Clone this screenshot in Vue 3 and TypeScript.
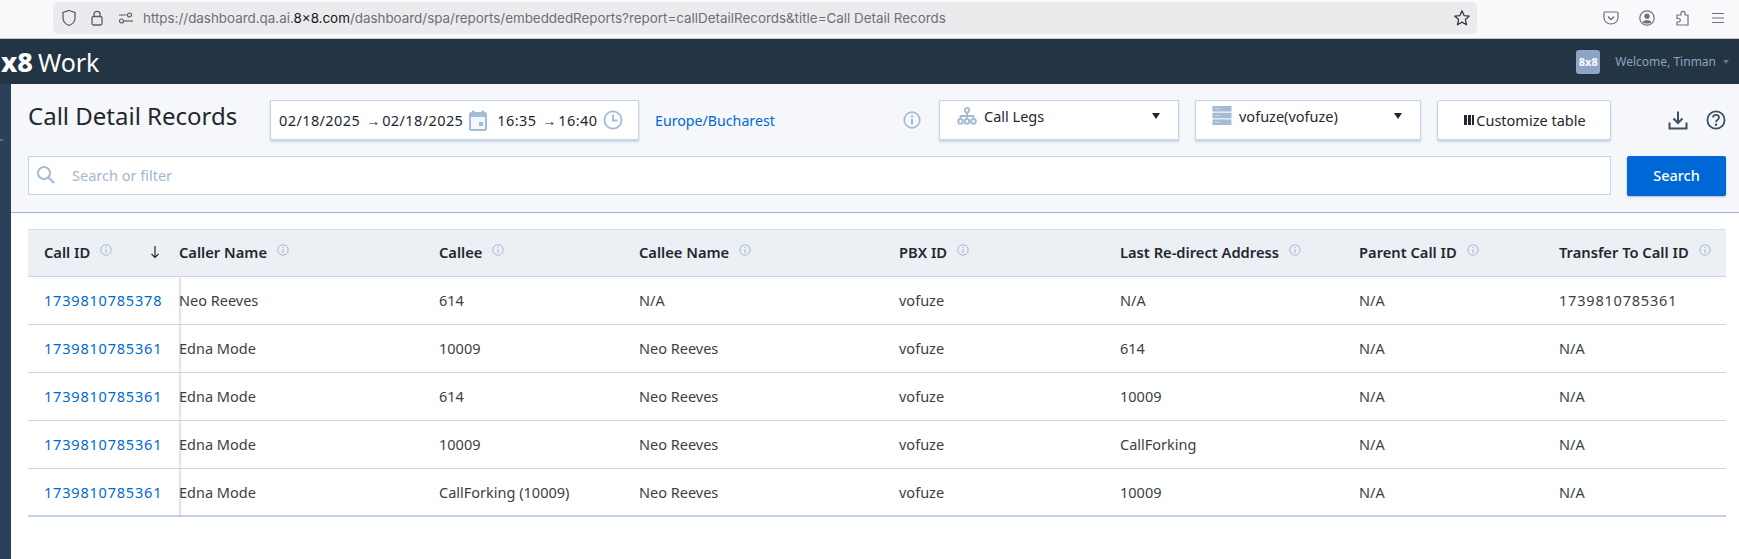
<template>
  <div class="page">
    <!-- Browser chrome -->
    <div class="browser-bar">
      <div class="url-bar">
        <svg class="url-icon shield" viewBox="0 0 16 18" width="16" height="18">
          <path d="M8 1.5 L14 3.5 V9 C14 12.5 11 15.5 8 16.5 C5 15.5 2 12.5 2 9 V3.5 Z" fill="none" stroke="#5b5b66" stroke-width="1.3" />
        </svg>
        <svg class="url-icon lock" viewBox="0 0 14 18" width="14" height="18">
          <rect x="2" y="7.5" width="10" height="8.5" rx="1.5" fill="none" stroke="#5b5b66" stroke-width="1.3" />
          <path d="M4 7.5 V5 C4 1.5 10 1.5 10 5 V7.5" fill="none" stroke="#5b5b66" stroke-width="1.3" />
        </svg>
        <svg class="url-icon perms" viewBox="0 0 16 14" width="16" height="14">
          <circle cx="11.5" cy="4" r="2" fill="none" stroke="#5b5b66" stroke-width="1.2" />
          <path d="M1 4 H8.5 M1 10 H7" stroke="#5b5b66" stroke-width="1.2" />
          <circle cx="3.5" cy="10" r="2" fill="#ebebee" stroke="#5b5b66" stroke-width="1.2" />
          <path d="M7 10 H15" stroke="#5b5b66" stroke-width="1.2" />
        </svg>
        <div class="url-text">https://dashboard.qa.ai.<span class="url-host">8x8.com</span>/dashboard/spa/reports/embeddedReports?report=callDetailRecords&amp;title=Call Detail Records</div>
        <svg class="star" viewBox="0 0 18 18" width="18" height="18">
          <path d="M9 1.8 L11.1 6.6 L16.3 7.1 L12.4 10.6 L13.5 15.8 L9 13.1 L4.5 15.8 L5.6 10.6 L1.7 7.1 L6.9 6.6 Z" fill="none" stroke="#3a3a44" stroke-width="1.3" stroke-linejoin="round" />
        </svg>
      </div>
      <div class="browser-tools">
        <svg viewBox="0 0 16 16" width="16" height="16">
          <path d="M2 2 H14 C14.6 2 15 2.4 15 3 V7.5 C15 11 12 14 8 14 C4 14 1 11 1 7.5 V3 C1 2.4 1.4 2 2 2 Z" fill="none" stroke="#70707c" stroke-width="1.2" />
          <path d="M5 6.5 L8 9.5 L11 6.5" fill="none" stroke="#70707c" stroke-width="1.4" />
        </svg>
        <svg viewBox="0 0 16 16" width="16" height="16">
          <circle cx="8" cy="8" r="7.2" fill="none" stroke="#70707c" stroke-width="1.2" />
          <circle cx="8" cy="6.2" r="2.6" fill="#70707c" />
          <path d="M3.4 12 C5 9.6 11 9.6 12.6 12 C11 14 5 14 3.4 12 Z" fill="#70707c" />
        </svg>
        <svg viewBox="0 0 16 16" width="16" height="16">
          <path d="M3 5 H7 V3 C7 0.8 11 0.8 11 3 V5 H14 V15 H3 V12 H4.5 C7 12 7 8.5 4.5 8.5 H3 Z" fill="none" stroke="#70707c" stroke-width="1.2" stroke-linejoin="round" />
        </svg>
        <svg viewBox="0 0 16 16" width="16" height="16">
          <path d="M2 3.5 H14 M2 8 H14 M2 12.5 H14" stroke="#70707c" stroke-width="1.2" />
        </svg>
      </div>
    </div>

    <!-- App nav -->
    <header class="nav">
      <div class="logo"><span class="logo-mark">x8</span><span class="logo-name">Work</span></div>
      <div class="nav-user">
        <div class="avatar">8x8</div>
        <span class="welcome">Welcome, Tinman</span>
        <span class="caret-small"></span>
      </div>
    </header>

    <div class="body">
      <aside class="sidebar">
        <svg viewBox="0 0 4 4" width="4" height="4">
          <path d="M0 1 L1.5 3 L3 1" fill="none" stroke="#8da5c4" stroke-width="0.8" />
        </svg>
      </aside>
      <main class="main">
        <section class="toolbar">
          <div class="toolbar-top">
            <h1 class="title">Call Detail Records</h1>
            <div class="date-box">
              <span>02/18/2025</span><span class="arrow">→</span><span>02/18/2025</span>
              <svg class="cal" viewBox="0 0 20 21" width="20" height="21">
                <path d="M1 4 C1 3 2 2 3 2 H4 V0.5 H6.5 V2 H13.5 V0.5 H16 V2 H17 C18 2 19 3 19 4 V19 C19 20 18 21 17 21 H3 C2 21 1 20 1 19 Z" fill="#a4bbd6" />
                <rect x="3" y="7" width="14" height="12" fill="#f3f6fa" />
                <rect x="11" y="12" width="4" height="4" fill="#a4bbd6" />
              </svg>
              <span class="time">16:35</span><span class="arrow">→</span><span>16:40</span>
              <svg class="clock" viewBox="0 0 20 20" width="20" height="20">
                <circle cx="10" cy="10" r="8.6" fill="none" stroke="#a4bbd6" stroke-width="1.8" />
                <path d="M10 4.5 V10.5 H14.5" fill="none" stroke="#a4bbd6" stroke-width="1.8" />
              </svg>
            </div>
            <a class="zone">Europe/Bucharest</a>
            <svg class="zone-info" viewBox="0 0 18 18" width="18" height="18">
              <circle cx="9" cy="9" r="7.8" fill="none" stroke="#a4bbd6" stroke-width="1.7" />
              <circle cx="9" cy="5.4" r="1.2" fill="#a4bbd6" />
              <path d="M9 8 V13.4" stroke="#a4bbd6" stroke-width="2" />
            </svg>
            <div class="select select-legs">
              <svg viewBox="0 0 20 18" width="20" height="18">
                <circle cx="10" cy="3.2" r="2.2" fill="none" stroke="#a4bbd6" stroke-width="1.8" />
                <path d="M10 5.5 V9 M3.5 12 V9 H16.5 V12 M10 9 V12" fill="none" stroke="#a4bbd6" stroke-width="1.8" />
                <circle cx="3.5" cy="14.4" r="2.3" fill="none" stroke="#a4bbd6" stroke-width="2" />
                <circle cx="10" cy="14.4" r="2.3" fill="none" stroke="#a4bbd6" stroke-width="2" />
                <circle cx="16.5" cy="14.4" r="2.3" fill="none" stroke="#a4bbd6" stroke-width="2" />
              </svg>
              <span class="select-label">Call Legs</span>
              <span class="caret"></span>
            </div>
            <div class="select select-pbx">
              <svg viewBox="0 0 19 19" width="20" height="19">
                <rect y="0" width="19" height="5.6" fill="#a4bbd6" />
                <rect y="6.7" width="19" height="5.6" fill="#a4bbd6" />
                <rect y="13.4" width="19" height="5.6" fill="#a4bbd6" />
                <path d="M3 2.8 H4.2 M6 2.8 H7.2 M3 9.5 H4.2 M6 9.5 H7.2 M3 16.2 H4.2 M6 16.2 H7.2" stroke="#fff" stroke-width="1" />
              </svg>
              <span class="select-label">vofuze(vofuze)</span>
              <span class="caret"></span>
            </div>
            <div class="customize">
              <span class="bars"><i></i><i></i><i></i></span>
              <span>Customize table</span>
            </div>
            <svg class="action-download" viewBox="0 0 20 20" width="20" height="20">
              <path d="M10 1.5 V13 M5.5 8.5 L10 13 L14.5 8.5" fill="none" stroke="#3c5066" stroke-width="2" />
              <path d="M1.5 12.5 V18.5 H18.5 V12.5" fill="none" stroke="#3c5066" stroke-width="2" />
            </svg>
            <svg class="action-help" viewBox="0 0 20 20" width="20" height="20">
              <circle cx="10" cy="10" r="8.6" fill="none" stroke="#3c5066" stroke-width="1.8" />
              <path d="M7 7.6 C7 3.9 13 3.9 13 7.6 C13 9.8 10 9.6 10 12.2" fill="none" stroke="#3c5066" stroke-width="1.8" />
              <circle cx="10" cy="14.8" r="1.2" fill="#3c5066" />
            </svg>
          </div>
          <div class="toolbar-search">
            <div class="search-box">
              <svg viewBox="0 0 20 20" width="20" height="20">
                <circle cx="8" cy="8" r="6" fill="none" stroke="#a4bbd6" stroke-width="2" />
                <path d="M12.5 12.5 L18 18" stroke="#a4bbd6" stroke-width="2.4" />
              </svg>
              <span class="placeholder">Search or filter</span>
            </div>
            <button class="search-btn">Search</button>
          </div>
        </section>

        <section class="table-wrap">
          <table class="records">
            <colgroup>
              <col v-for="col in columns" :key="col.label" :style="{ width: col.width + 'px' }" />
            </colgroup>
            <thead>
              <tr>
                <th v-for="(col, index) in columns" :key="col.label" :class="{ first: index === 0 }">
                  <div class="th-inner">
                    <span>{{ col.label }}</span>
                    <svg class="th-info" viewBox="0 0 12 12" width="12" height="12">
                      <circle cx="6" cy="6" r="5.2" fill="none" stroke="#a4bbd6" stroke-width="1" />
                      <path d="M6 5 V9 M6 3 V4" stroke="#a4bbd6" stroke-width="1.1" />
                    </svg>
                    <svg v-if="index === 0" class="sort" viewBox="0 0 10 14" width="10" height="14">
                      <path d="M5 1 V12.5 M1.5 9 L5 12.5 L8.5 9" fill="none" stroke="#1f2933" stroke-width="1.2" />
                    </svg>
                  </div>
                </th>
              </tr>
            </thead>
            <tbody>
              <tr v-for="(row, r) in rows" :key="r">
                <td v-for="(cell, c) in row" :key="c" :class="{ first: c === 0, long: isCallId(cell) }">{{ cell }}</td>
              </tr>
            </tbody>
          </table>
        </section>
      </main>
    </div>
  </div>
</template>

<script setup lang="ts">
const columns = [
  { label: 'Call ID', width: 151 },
  { label: 'Caller Name', width: 260 },
  { label: 'Callee', width: 200 },
  { label: 'Callee Name', width: 260 },
  { label: 'PBX ID', width: 221 },
  { label: 'Last Re-direct Address', width: 239 },
  { label: 'Parent Call ID', width: 200 },
  { label: 'Transfer To Call ID', width: 167 }
]

const rows = [
  ['1739810785378', 'Neo Reeves', '614', 'N/A', 'vofuze', 'N/A', 'N/A', '1739810785361'],
  ['1739810785361', 'Edna Mode', '10009', 'Neo Reeves', 'vofuze', '614', 'N/A', 'N/A'],
  ['1739810785361', 'Edna Mode', '614', 'Neo Reeves', 'vofuze', '10009', 'N/A', 'N/A'],
  ['1739810785361', 'Edna Mode', '10009', 'Neo Reeves', 'vofuze', 'CallForking', 'N/A', 'N/A'],
  ['1739810785361', 'Edna Mode', 'CallForking (10009)', 'Neo Reeves', 'vofuze', '10009', 'N/A', 'N/A']
]

// Call ids are the only 13 digit values
const isCallId = (cell: string) => /^\d{13}$/.test(cell)
</script>

<style>
html,
body {
  margin: 0;
  background: #fff;
}
</style>

<style scoped>
.page {
  width: 1739px;
  height: 559px;
  overflow: hidden;
  display: flex;
  flex-direction: column;
  font-family: "Noto Sans", "Open Sans", sans-serif;
  color: #2b3440;
}

.browser-bar {
  height: 38px;
  flex-shrink: 0;
  display: flex;
  align-items: flex-start;
  background: #f9f9fb;
  border-bottom: 1px solid #c9c9cd;
}

.url-bar {
  width: 1424px;
  height: 32px;
  margin: 2px 0 0 53px;
  display: flex;
  align-items: center;
  background: #ebebee;
  border-radius: 5px;
  flex-shrink: 0;
}

.url-icon {
  flex-shrink: 0;
}

.shield {
  margin-left: 8px;
}

.lock {
  margin-left: 13px;
}

.perms {
  margin-left: 14px;
}

.url-text {
  margin-left: 9px;
  font-family: "Inter", sans-serif;
  font-size: 13.4px;
  color: #6e6e78;
  white-space: nowrap;
}

.url-host {
  color: #15141a;
}

.star {
  margin-left: auto;
  margin-right: 6px;
}

.browser-tools {
  display: flex;
  gap: 19.5px;
  margin: 10px 0 0 126px;
}

.nav {
  height: 45px;
  flex-shrink: 0;
  display: flex;
  align-items: center;
  justify-content: space-between;
  background: #233444;
}

.logo {
  display: flex;
  align-items: baseline;
  color: #fff;
  padding-left: 1px;
}

.logo-mark {
  font-size: 27px;
  font-weight: 800;
  line-height: 1;
}

.logo-name {
  font-size: 25px;
  margin-left: 5px;
  line-height: 1;
}

.nav-user {
  display: flex;
  align-items: center;
  margin-right: 10px;
}

.avatar {
  width: 24px;
  height: 24px;
  background: #8da5c4;
  border-radius: 3px;
  color: #fff;
  font-size: 11px;
  font-weight: 700;
  display: flex;
  align-items: center;
  justify-content: center;
}

.welcome {
  margin-left: 15px;
  font-size: 12px;
  color: #8ea3bd;
}

.caret-small {
  margin-left: 7px;
  border-left: 3.5px solid transparent;
  border-right: 3.5px solid transparent;
  border-top: 4px solid #5f7690;
}

.body {
  flex: 1;
  display: flex;
  min-height: 0;
}

.sidebar {
  width: 11px;
  flex-shrink: 0;
  box-sizing: border-box;
  padding-top: 54px;
  background: #2a4159;
}

.sidebar svg {
  display: block;
}

.main {
  flex: 1;
  background: #fff;
  min-width: 0;
}

.toolbar {
  height: 129px;
  box-sizing: border-box;
  padding: 16px 11px 0 17px;
  background: #f5f7fa;
  border-bottom: 1px solid #9db4cd;
}

.toolbar-top {
  display: flex;
  align-items: center;
  height: 40px;
}

.title {
  width: 242px;
  margin: -9px 0 0;
  font-size: 24px;
  font-weight: 400;
  color: #1f2730;
  white-space: nowrap;
}

.date-box {
  width: 369px;
  height: 40px;
  box-sizing: border-box;
  display: flex;
  align-items: center;
  padding-left: 8px;
  background: #fff;
  border: 1px solid #c5d5e6;
  box-shadow: 0 2px 2px #c5d5e6;
  font-size: 14.5px;
  letter-spacing: 0.4px;
  color: #1f2730;
  white-space: nowrap;
}

.arrow {
  width: 10px;
  margin: 0 6px 0 6px;
  font-size: 14px;
  text-align: center;
  letter-spacing: 0;
}

.cal {
  margin-left: 5px;
  flex-shrink: 0;
}

.time {
  margin-left: 9px;
}

.clock {
  margin-left: 6px;
  flex-shrink: 0;
}

.zone {
  margin-left: 16px;
  width: 248px;
  font-size: 14.2px;
  color: #0068d6;
  white-space: nowrap;
}

.zone-info {
  flex-shrink: 0;
}

.select {
  height: 40px;
  box-sizing: border-box;
  display: flex;
  align-items: center;
  padding-bottom: 9px;
  background: #fff;
  border: 1px solid #c5d5e6;
  box-shadow: 0 2px 2px #c5d5e6;
  font-size: 14.5px;
  color: #1f2730;
  flex-shrink: 0;
}

.select-legs {
  width: 240px;
  margin-left: 18px;
  padding-left: 17px;
}

.select-pbx {
  width: 226px;
  margin-left: 16px;
  padding-left: 16px;
}

.select-label {
  margin-left: 7px;
}

.caret {
  margin-left: auto;
  margin-right: 18px;
  border-left: 4.5px solid transparent;
  border-right: 4.5px solid transparent;
  border-top: 6px solid #1f2730;
}

.customize {
  width: 174px;
  height: 40px;
  box-sizing: border-box;
  margin-left: 16px;
  padding-left: 2px;
  display: flex;
  align-items: center;
  justify-content: center;
  gap: 2px;
  background: #fff;
  border: 1px solid #c5d5e6;
  border-radius: 2px;
  box-shadow: 0 2px 2px #c5d5e6;
  font-size: 14.5px;
  color: #1f2730;
  white-space: nowrap;
  flex-shrink: 0;
}

.bars {
  display: flex;
  gap: 1.4px;
}

.bars i {
  width: 2.4px;
  height: 10px;
  background: #1f2730;
}

.action-download {
  margin-left: 57px;
  flex-shrink: 0;
}

.action-help {
  margin-left: 18px;
  flex-shrink: 0;
}

.toolbar-search {
  display: flex;
  margin-top: 16px;
}

.search-box {
  width: 1583px;
  height: 39px;
  box-sizing: border-box;
  display: flex;
  align-items: center;
  padding-left: 7px;
  padding-bottom: 1px;
  background: #fff;
  border: 1px solid #c5d5e6;
}

.placeholder {
  margin-left: 16px;
  font-size: 14.5px;
  color: #a3b7cf;
}

.search-btn {
  width: 99px;
  height: 40px;
  margin-left: 16px;
  padding: 0 0 2px;
  background: #0067d6;
  border: none;
  border-radius: 2px;
  box-shadow: 0 1px 2px #a9bdd3;
  color: #fff;
  font-family: inherit;
  font-size: 14.5px;
  font-weight: 500;
}

.table-wrap {
  padding: 16px 11px 0 17px;
}

.records {
  width: 1698px;
  table-layout: fixed;
  border-collapse: separate;
  border-spacing: 0;
  font-size: 14.5px;
}

th {
  height: 48px;
  padding: 0 0 2px;
  box-sizing: border-box;
  background: #eceff4;
  border-top: 1px solid #d3deea;
  border-bottom: 1px solid #c5d5e6;
  text-align: left;
  font-size: 14.7px;
  font-weight: 600;
  color: #1f2730;
}

.th-inner {
  display: flex;
  align-items: center;
  white-space: nowrap;
}

th.first .th-inner {
  padding-left: 16px;
}

.th-info {
  margin: -4px 0 0 10px;
  flex-shrink: 0;
}

.sort {
  margin-left: auto;
  margin-right: 19px;
}

td {
  height: 48px;
  padding: 0 0 2px;
  box-sizing: border-box;
  border-bottom: 1px solid #c9d7e6;
  color: #3a3f47;
  white-space: nowrap;
}

td.long {
  letter-spacing: 0.8px;
}

td.first {
  padding-left: 16px;
  color: #0068d6;
  box-shadow: 1px 0 3px rgba(60, 70, 85, 0.28);
  clip-path: inset(0 -6px 0 0);
}

tbody tr:last-child td {
  padding-bottom: 0;
  border-bottom: 2px solid #c5d2e3;
}
</style>
